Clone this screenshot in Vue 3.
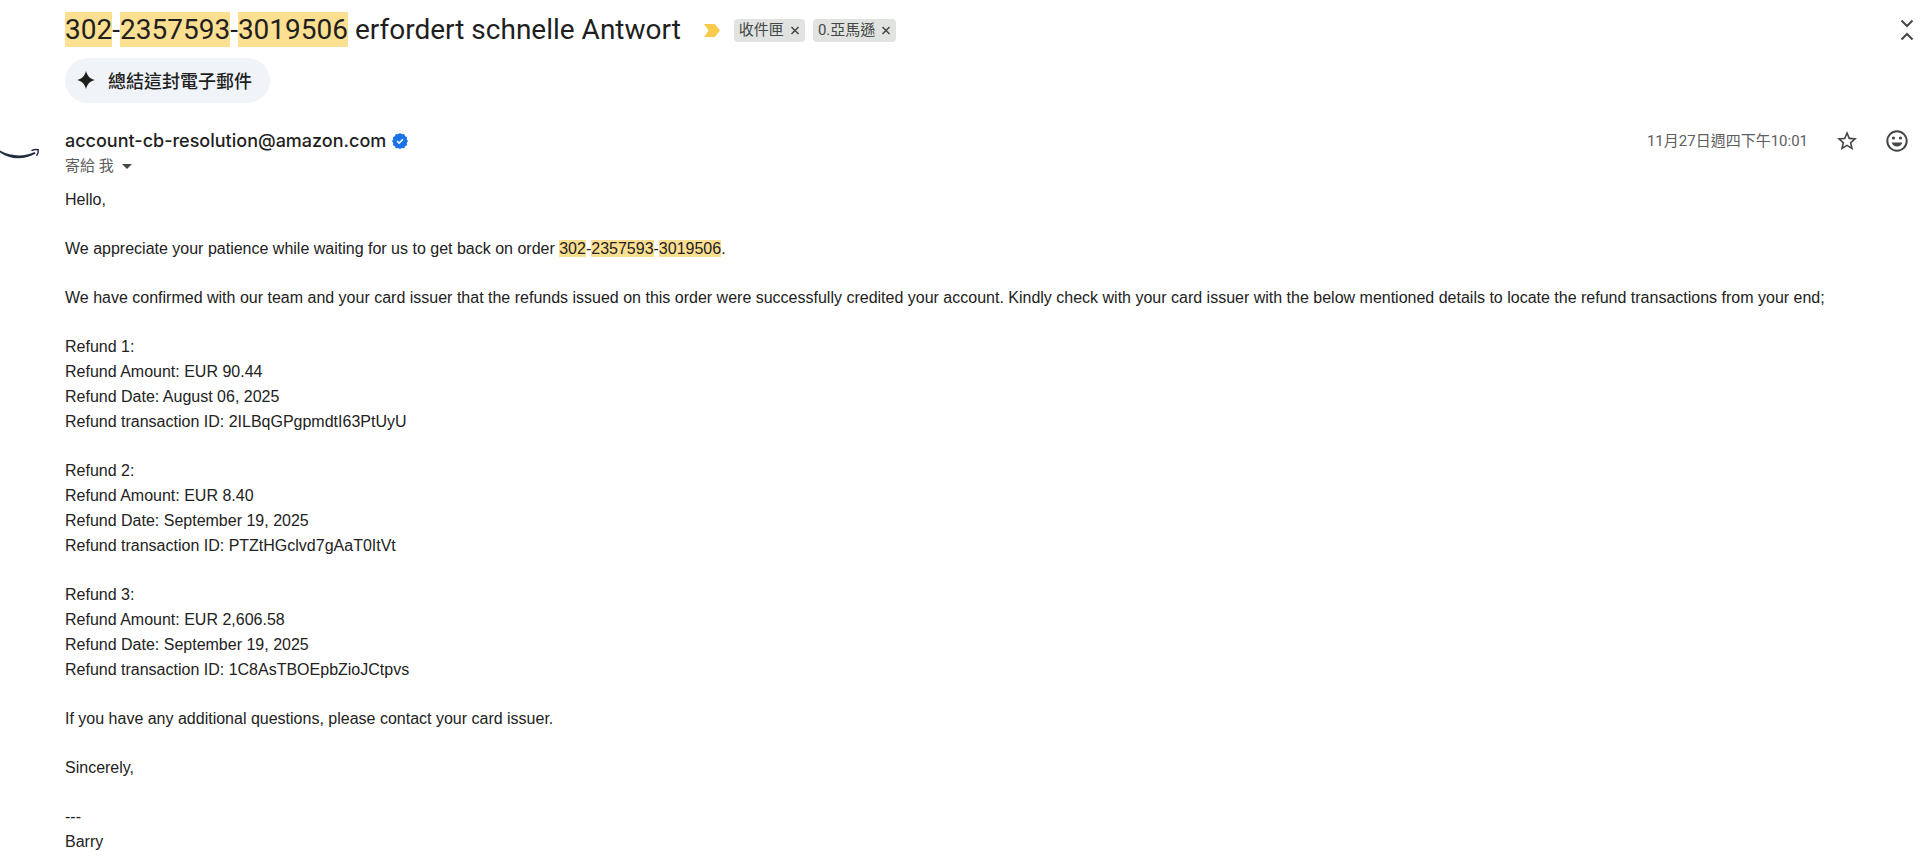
<template>
  <main class="mail">
    <header class="subject-row">
      <h1 class="subject">
        <template v-for="(part, i) in orderParts" :key="part"
          ><span v-if="i">-</span><mark>{{ part }}</mark></template
        >
        erfordert schnelle Antwort
      </h1>
      <button class="icon-button marker" type="button" aria-label="重要">
        <svg width="16" height="13" viewBox="0 0 16 13">
          <path d="M0 0h11l5 6.500-5 6.500H0l4.500-6.500z" fill="#f7cb4d" />
        </svg>
      </button>
      <ul class="labels">
        <li v-for="label in labels" :key="label" class="label">
          <a href="#">{{ label }}</a>
          <button class="icon-button" type="button" :aria-label="label">
            <svg width="10" height="10" viewBox="0 0 10 10">
              <path d="M1.500 2l7 7M8.500 2l-7 7" stroke="#444746" stroke-width="1.500" />
            </svg>
          </button>
        </li>
      </ul>
      <button class="icon-button collapse" type="button" aria-label="全部收合">
        <svg width="14" height="22" viewBox="0 0 14 22">
          <path
            d="M1.500 1.500L7 7l5.500-5.500M1.500 20.500L7 15l5.500 5.500"
            fill="none"
            stroke="#444746"
            stroke-width="2"
          />
        </svg>
      </button>
    </header>

    <button class="summarize" type="button">
      <svg width="18" height="18" viewBox="0 0 18 18">
        <path
          d="M9 0c1.300 5 4 7.700 9 9-5 1.300-7.700 4-9 9-1.300-5-4-7.700-9-9 5-1.300 7.700-4 9-9z"
          fill="#1f1f1f"
        />
      </svg>
      總結這封電子郵件
    </button>

    <section class="sender-row">
      <div class="avatar">
        <svg width="40" height="12" viewBox="0 0 40 12">
          <path
            d="M0 2.500C11 8.500 24 9 34.500 4l1.200 1.500C25 12 10 12 0 4.500z"
            fill="#232f3e"
          />
          <path
            d="M31.500 2.600C33.500 1.600 36.500 1.300 38.200 1.700c.3 1.800-.3 4.200-1.700 6"
            fill="none"
            stroke="#232f3e"
            stroke-width="1.500"
          />
        </svg>
      </div>
      <div class="sender">
        <div class="sender-name">
          <strong>account-cb-resolution@amazon.com</strong>
          <svg width="16" height="16" viewBox="0 0 16 16">
            <path
              d="M8 0l1.900 1.300 2.300-.2.900 2.100 2 1.100-.3 2.300L16 8l-1.200 1.900.3 2.200-2 1.100-.9 2-2.300-.2L8 16l-1.900-1-2.300.2-.9-2-2-1.100.3-2.200L0 8l1.200-1.400-.3-2.300 2-1.100.9-2.100 2.300.2z"
              fill="#1a73e8"
            />
            <path d="M5 8l2.100 2.100L11 6.200" fill="none" stroke="#fff" stroke-width="1.500" />
          </svg>
        </div>
        <div class="recipient">
          寄給 我
          <button class="icon-button" type="button" aria-label="顯示詳細資料">
            <svg width="10" height="5" viewBox="0 0 10 5">
              <path d="M0 0h10L5 5z" fill="#444746" />
            </svg>
          </button>
        </div>
      </div>
      <div class="actions">
        <time>11月27日週四下午10:01</time>
        <button class="icon-button" type="button" aria-label="加星號">
          <svg width="24" height="24" viewBox="0 0 24 24">
            <path
              d="M22 9.240l-7.190-.620L12 2 9.190 8.630 2 9.240l5.460 4.730L5.820 21 12 17.270 18.180 21l-1.630-7.030L22 9.240zM12 15.400l-3.760 2.270 1-4.280-3.320-2.880 4.380-.380L12 6.100l1.710 4.040 4.380.380-3.320 2.880 1 4.280L12 15.400z"
              fill="#444746"
            />
          </svg>
        </button>
        <button class="icon-button" type="button" aria-label="新增表情符號回應">
          <svg width="22" height="22" viewBox="0 0 22 22">
            <circle cx="11" cy="11" r="9.700" fill="none" stroke="#444746" stroke-width="2" />
            <circle cx="7.500" cy="8" r="1.600" fill="#444746" />
            <circle cx="14.500" cy="8" r="1.600" fill="#444746" />
            <path d="M5.700 12.500h10.600c-.8 2.500-2.800 4-5.300 4s-4.500-1.500-5.300-4z" fill="#444746" />
          </svg>
        </button>
      </div>
    </section>

    <article class="body">
      <p>Hello,</p>
      <p>
        We appreciate your patience while waiting for us to get back on order
        <template v-for="(part, i) in orderParts" :key="part"
          ><span v-if="i">-</span><mark>{{ part }}</mark></template
        >.
      </p>
      <p>
        We have confirmed with our team and your card issuer that the refunds issued on this order
        were successfully credited your account. Kindly check with your card issuer with the below
        mentioned details to locate the refund transactions from your end;
      </p>
      <p v-for="(refund, i) in refunds" :key="refund.id">
        Refund {{ i + 1 }}:<br />
        Refund Amount: EUR {{ refund.amount }}<br />
        Refund Date: {{ refund.date }}<br />
        Refund transaction ID: {{ refund.id }}
      </p>
      <p>If you have any additional questions, please contact your card issuer.</p>
      <p>Sincerely,</p>
      <p>---<br />Barry</p>
    </article>
  </main>
</template>

<script setup>
const orderParts = ["302", "2357593", "3019506"];

const labels = ["收件匣", "0.亞馬遜"];

const refunds = [
  { amount: "90.44", date: "August 06, 2025", id: "2ILBqGPgpmdtI63PtUyU" },
  { amount: "8.40", date: "September 19, 2025", id: "PTZtHGclvd7gAaT0ItVt" },
  { amount: "2,606.58", date: "September 19, 2025", id: "1C8AsTBOEpbZioJCtpvs" },
];
</script>

<style>
body {
  margin: 0;
  background: #fff;
}
</style>

<style scoped>
.mail {
  color: #1f1f1f;
  font-family: Roboto, "Noto Sans CJK TC", sans-serif;
}

mark {
  background: #fddf92;
  color: inherit;
}

svg {
  display: block;
  flex: none;
}

.icon-button {
  display: flex;
  padding: 0;
  border: 0;
  background: none;
  cursor: pointer;
}

.subject-row {
  display: flex;
  align-items: center;
  padding: 12px 6px 0 65px;
}

.subject {
  margin: 0;
  font-size: 28px;
  font-weight: 400;
  line-height: 36px;
}

.subject mark {
  display: inline-block;
  line-height: 35px;
}

.marker {
  margin: 0 14px 0 23px;
}

.labels {
  display: flex;
  gap: 8px;
  margin: 0;
  padding: 0;
  list-style: none;
}

.label {
  display: flex;
  align-items: center;
  gap: 6px;
  padding: 0 5px;
  border-radius: 4px;
  background: #e1e3e1;
  font-size: 15px;
  line-height: 23px;
}

.label a {
  color: #444746;
  text-decoration: none;
}

.collapse {
  margin-left: auto;
}

.summarize {
  display: flex;
  align-items: center;
  gap: 13px;
  height: 45px;
  margin: 10px 0 0 65px;
  padding: 0 18px 2px 12px;
  border: 0;
  border-radius: 23px;
  background: #f0f4f9;
  color: #1f1f1f;
  font-family: inherit;
  font-size: 18px;
  font-weight: 500;
  cursor: pointer;
}

.sender-row {
  display: flex;
  align-items: flex-start;
  padding: 25px 12px 0 0;
}

.avatar {
  width: 65px;
  padding-top: 20px;
}

.sender-name {
  display: flex;
  align-items: center;
  gap: 6px;
  font-family: Inter, sans-serif;
  font-size: 18px;
  line-height: 26px;
}

.sender-name strong {
  font-weight: 500;
}

.recipient {
  display: flex;
  align-items: center;
  gap: 8px;
  color: #5e5e5e;
  font-size: 15px;
  line-height: 24px;
}

.actions {
  display: flex;
  align-items: center;
  gap: 27px;
  margin-left: auto;
  color: #5e5e5e;
  font-size: 15px;
  line-height: 26px;
}

.body {
  padding: 9px 24px 0 65px;
  color: #222;
  font-family: "Liberation Sans", Arial, sans-serif;
  font-size: 16px;
  line-height: 25px;
}

.body p {
  margin: 0 0 24px;
}
</style>
